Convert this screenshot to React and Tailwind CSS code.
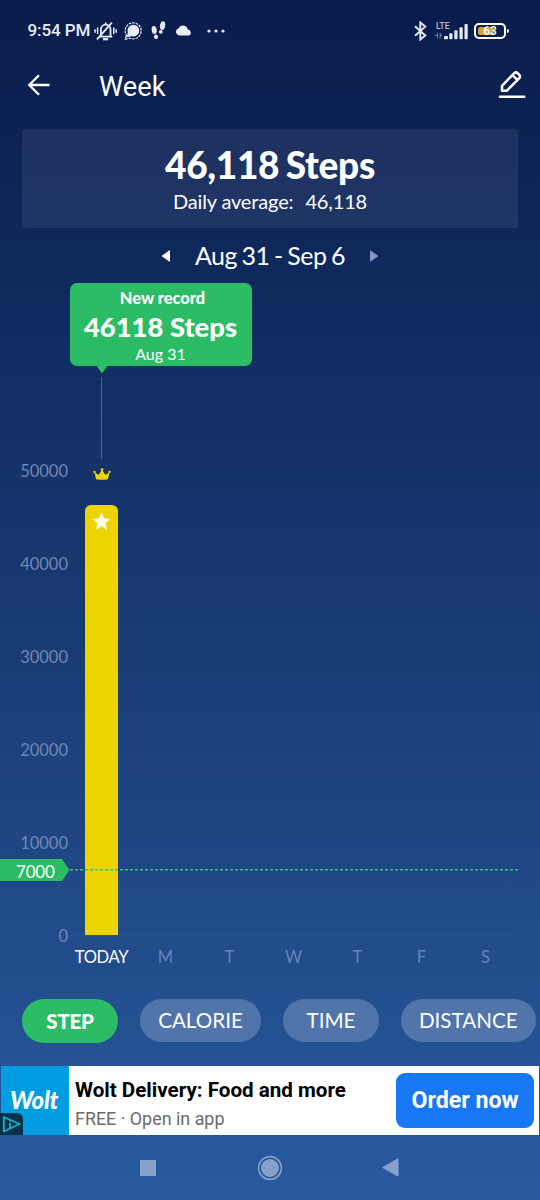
const ticks = [50000, 40000, 30000, 20000, 10000, 0]
const MAX = 50000
const PLOT_HEIGHT = 466

const days = [
  { label: "TODAY", steps: 46118, record: true },
  { label: "M", steps: 0 },
  { label: "T", steps: 0 },
  { label: "W", steps: 0 },
  { label: "T", steps: 0 },
  { label: "F", steps: 0 },
  { label: "S", steps: 0 },
]

function StatusBar() {
  return (
    <div className="h-[60px] shrink-0 flex items-center pt-[1px] pl-[27.5px] pr-[31px] font-['Roboto',sans-serif] text-[#e8ecf8]">
      <span className="w-[66px] pt-px text-[17px] font-medium tracking-[-0.1px] whitespace-nowrap">9:54 PM</span>
      {/* muted / vibrating bell */}
      <svg className="w-[23px] h-[20px]" viewBox="0 0 23 20" fill="none" stroke="currentColor" strokeWidth="1.8">
        <path d="M5.6 15.6h12.6M6.9 15V8.5a4.8 4.8 0 0 1 9.6 0V15M11.7 3.8V1.4" />
        <path d="M3 18.3 17.9 1.6" />
        <path d="M9 18.2h5.2" strokeWidth="2.2" />
        <path d="M3.6 6.5v6.5M1 8.3v3.4M19.8 6.5v6.5M22.2 8.3v3.4" strokeWidth="1.5" />
      </svg>
      <svg className="w-[18px] h-[18px] ml-[7px]" viewBox="0 0 18 18">
        <circle cx="9.4" cy="8.6" r="5.9" fill="currentColor" />
        <path d="m3.8 10.6-.9 4.6 5-1z" fill="currentColor" />
        <path
          d="M3.4 14.4A8 8 0 1 1 6 16.2L1.4 17.2 2.3 13"
          fill="none"
          stroke="currentColor"
          strokeWidth="1.2"
          strokeDasharray="2.6 0.9"
        />
      </svg>
      <svg className="w-[15px] h-[19px] ml-[9px]" viewBox="0 0 15 19" fill="currentColor">
        <ellipse cx="3.2" cy="9" rx="2.5" ry="4" transform="rotate(-9 3.2 9)" />
        <ellipse cx="5" cy="15.8" rx="2" ry="2.3" transform="rotate(-12 5 15.8)" />
        <ellipse cx="11.6" cy="4.7" rx="2.6" ry="4.4" transform="rotate(9 11.6 4.7)" />
        <ellipse cx="9.8" cy="10.9" rx="1.9" ry="1.8" />
      </svg>
      <svg className="w-[17px] h-[11px] ml-[9px] mt-[-1px]" viewBox="0 0 17 11" fill="currentColor">
        <path d="M4 10.5A3.7 3.7 0 0 1 3.4 3.4a5 5 0 0 1 9.4 1.2A3 3 0 0 1 13.6 10.5z" />
      </svg>
      <svg className="w-[18px] h-1 ml-[15px]" viewBox="0 0 18 4" fill="currentColor">
        <circle cx="2" cy="2" r="1.6" />
        <circle cx="9" cy="2" r="1.6" />
        <circle cx="16" cy="2" r="1.6" />
      </svg>
      <div className="ml-auto flex items-center">
        <svg className="w-[13px] h-[20px]" viewBox="0 0 13 20" fill="none" stroke="currentColor" strokeWidth="1.9">
          <path d="m1 5.2 10.3 9.3L6.3 18.5v-17L11.3 5.6 1 14.8" />
        </svg>
        <div className="w-[33px] h-[18px] ml-2 flex flex-col justify-between relative">
          <span className="text-[8.5px] leading-[9px] pl-px text-[#b4bfdc] font-medium">LTE</span>
          <svg className="absolute left-0 bottom-0 w-[33px] h-[17px]" viewBox="0 0 33 17" fill="currentColor">
            <path d="M0 12h2V9.8h1v5.6H2V13H0zM4.6 9.8h1v1.4l2 1.6-2 .4v2.2h-1z" opacity=".5" />
            <rect x="9" y="13" width="4" height="3.3" rx="1" />
            <rect x="14.3" y="10.3" width="3.2" height="6" rx="1" />
            <rect x="19.3" y="7.2" width="3.2" height="9.1" rx="1" />
            <rect x="24.5" y="4.2" width="3.2" height="12.1" rx="1" />
            <rect x="29.5" y="1" width="3.2" height="15.3" rx="1" />
          </svg>
        </div>
        <div className="relative w-[32px] h-[16px] ml-[6px] border-2 border-white rounded-[5px] p-[2px]">
          <div className="w-[16px] h-full rounded-[2px] bg-[#e0a030]" />
          <span className="absolute inset-0 text-center text-[12px] leading-[12px] font-medium text-white">63</span>
        </div>
        <div className="w-[2px] h-1 ml-px rounded-r bg-white" />
      </div>
    </div>
  )
}

function AppBar() {
  return (
    <header className="h-[69px] shrink-0 flex items-start pl-[27px] pr-[14px] text-white">
      <svg className="w-[24px] h-[22px] mt-[14px]" viewBox="0 0 24 22" fill="none" stroke="currentColor" strokeWidth="2.3">
        <path d="M22.5 11H2.5M12 1.2 2.2 11l9.8 9.8" />
      </svg>
      <h1 className="ml-12 mt-[9px] text-[27.3px] leading-[36px] font-['Roboto',sans-serif]">Week</h1>
      <svg
        className="w-[28px] h-[28px] ml-auto mt-[11px]"
        viewBox="0 0 28 28"
        fill="none"
        stroke="currentColor"
        strokeWidth="2.5"
        strokeLinecap="round"
        strokeLinejoin="round"
      >
        <path d="M4 19.8v-5L16 2.3a2.7 2.7 0 0 1 3.8 0l1.3 1.3a2.7 2.7 0 0 1 0 3.8L8.9 19.7zM14.6 4.2l4.4 4.4" />
        <path d="M2 25.7h24.2" strokeWidth="2.6" />
      </svg>
    </header>
  )
}

function RecordTooltip() {
  return (
    <div className="absolute left-[69.5px] top-0 w-[182px] h-[82.5px] rounded-[7px] bg-[#2dbc66] text-white text-center">
      <p className="pt-1 pl-[4px] text-[16.4px] leading-[21px] font-black">New record</p>
      <p className="text-[27.4px] leading-[37px] font-black whitespace-nowrap">46118 Steps</p>
      <p className="text-[16px] leading-[18px]">Aug 31</p>
      <svg className="absolute left-[26px] top-[82px] w-[12px] h-[9px]" viewBox="0 0 12 9" fill="#2dbc66">
        <path d="M0 0h12L6 8.5z" />
      </svg>
    </div>
  )
}

function DayBar({ day }) {
  return (
    <div className="flex flex-col items-center justify-end">
      {day.record && (
        <>
          <div className="w-px h-[82px] bg-[#25806b]" />
          <svg className="w-[18px] h-[12px] mt-[9px] mb-[25px]" viewBox="0 0 18 12" fill="#ecd400">
            <path d="M3 11.2 1.5 4.5 5.8 6.8 9 1.8l3.2 5 4.3-2.3L15 11.2q-6 1.2-12 0z" />
            <circle cx="1.5" cy="3.9" r="1.2" />
            <circle cx="9" cy="1.6" r="1.4" />
            <circle cx="16.5" cy="3.9" r="1.2" />
          </svg>
        </>
      )}
      {day.steps > 0 && (
        <div
          className="w-[32.5px] shrink-0 rounded-t-[6px] bg-[#ecd400] flex justify-center pt-[7px]"
          style={{ height: (day.steps / MAX) * PLOT_HEIGHT }}
        >
          <svg className="w-[19px] h-[18px]" viewBox="0 0 19 18" fill="#fffce4">
            <path d="m9.5.3 2.6 6 6.5.6-4.9 4.4 1.4 6.4-5.6-3.3-5.6 3.3 1.4-6.4L.4 6.9l6.5-.6z" />
          </svg>
        </div>
      )}
    </div>
  )
}

function StepsChart() {
  return (
    <section className="relative h-[685px] shrink-0">
      <div className="flex h-[665px]">
        <div className="w-[68px] pt-[176px] flex flex-col justify-between text-right text-[16.5px] leading-6 text-[#7186b5]">
          {ticks.map((t) => (
            <span key={t}>{t}</span>
          ))}
        </div>
        <div className="ml-[1.5px] w-[448px] h-[653px] grid grid-cols-7 border-b border-white/3">
          {days.map((day, i) => (
            <DayBar key={i} day={day} />
          ))}
        </div>
      </div>
      <div className="ml-[69.5px] w-[448px] grid grid-cols-7 justify-items-center text-[16.6px] leading-[18px]">
        {days.map((day, i) => (
          <span key={i} className={day.record ? "text-white tracking-[-0.4px]" : "text-[#6683b8]"}>
            {day.label}
          </span>
        ))}
      </div>

      {/* daily goal marker */}
      <div className="absolute left-0 top-[575px] w-[518px] h-[23px] flex items-center">
        <div className="relative w-[70px] h-[22px] text-white text-[17px] leading-[25px]">
          <svg className="absolute inset-0 w-[70px] h-[22px]" viewBox="0 0 70 22" fill="#2dbc66">
            <path d="M0 0h62l7.5 11L62 22H0z" />
          </svg>
          <span className="relative pl-4 tracking-[-0.2px]">7000</span>
        </div>
        <svg className="flex-1 h-[2px]" viewBox="0 0 448 2" preserveAspectRatio="none">
          <path d="M0 .8h448" stroke="#36c27a" strokeWidth="1.6" strokeDasharray="3 2" />
        </svg>
      </div>
      <RecordTooltip />
    </section>
  )
}

function MetricTabs() {
  return (
    <div className="mt-[31px] h-[67px] shrink-0 flex items-start gap-[22px] pl-[22px] text-[20.6px] text-white">
      <button className="w-24 h-[44px] shrink-0 rounded-full bg-[#2dbc66] font-black tracking-[-0.3px]">STEP</button>
      <button className="w-[121px] h-[43px] shrink-0 rounded-full bg-[#5174ab]">CALORIE</button>
      <button className="w-24 h-[43px] shrink-0 rounded-full bg-[#5174ab]">TIME</button>
      <button className="w-[134.5px] h-[43px] shrink-0 rounded-full bg-[#5174ab]">DISTANCE</button>
    </div>
  )
}

function AdBanner() {
  return (
    <div className="h-[69px] shrink-0 flex bg-white font-['Roboto',sans-serif] mx-px">
      <div className="relative w-[68px] h-full bg-[#009de0] text-white">
        <span className="block pt-[19px] pr-[2px] text-center text-[24px] leading-[30px] font-['Lato',sans-serif] font-black italic tracking-[-0.3px]">
          Wolt
        </span>
        <svg className="absolute left-[-1px] bottom-0 w-[23px] h-[22px]" viewBox="0 0 23 22" fill="none">
          <path d="M0 0h17a6 6 0 0 1 6 6v16H0z" fill="#07304a" />
          <path d="M3.8 4v14.5L19.5 11z" stroke="#14b3c9" strokeWidth="1.8" strokeLinejoin="round" />
          <path d="M10 10v5M10 7v1.6" stroke="#14b3c9" strokeWidth="1.9" />
        </svg>
      </div>
      <div className="pl-[6px] pt-[11px]">
        <p className="text-[20.6px] leading-[27px] font-bold text-black whitespace-nowrap">Wolt Delivery: Food and more</p>
        <p className="text-[17.9px] leading-[30px] text-[#6b6b6b]">FREE · Open in app</p>
      </div>
      <button className="ml-auto mr-[5px] mt-[7px] w-[138px] h-[55px] rounded-[9px] bg-[#1877f2] text-white text-[23.2px] font-bold whitespace-nowrap">
        Order now
      </button>
    </div>
  )
}

function NavBar() {
  return (
    <nav className="h-[65px] shrink-0 flex items-center pl-[140px] text-[#87a0cb]">
      <div className="w-[16px] h-[16px] bg-current" />
      <svg className="w-[26px] h-[26px] ml-[101px]" viewBox="0 0 26 26">
        <circle cx="13" cy="13" r="11.4" fill="none" stroke="currentColor" strokeWidth="1.6" />
        <circle cx="13" cy="13" r="9" fill="currentColor" />
      </svg>
      <svg className="w-[17px] h-[19px] ml-[98.5px]" viewBox="0 0 17 19" fill="currentColor">
        <path d="M16 .8v17.4L.6 9.5z" stroke="currentColor" strokeLinejoin="round" />
      </svg>
    </nav>
  )
}

export default function App() {
  return (
    <div className="w-[540px] h-[1200px] overflow-hidden flex flex-col bg-linear-to-b from-[#091c4c] via-[#183971] to-[#295a9f] font-['Lato',sans-serif]">
      <StatusBar />
      <AppBar />
      <div className="mx-[22px] h-[99px] shrink-0 rounded-[4px] bg-white/7 text-white text-center">
        <p className="pt-[13px] text-[37px] leading-[46px] font-black tracking-[-0.3px] [word-spacing:-2px]">46,118 Steps</p>
        <p className="text-[20px] leading-[26px] tracking-[-0.15px]">
          Daily average:<span className="ml-3">46,118</span>
        </p>
      </div>
      <div className="h-[55px] shrink-0 flex items-center justify-center text-white">
        <svg className="w-[9px] h-[12px]" viewBox="0 0 9 12" fill="currentColor">
          <path d="M9 0v12L.5 6z" />
        </svg>
        <span className="w-[200px] pb-[2px] text-center text-[25px] leading-[30px] tracking-[-0.5px] [word-spacing:-1.4px]">
          Aug 31 - Sep 6
        </span>
        <svg className="w-[9px] h-[12px] text-[#8495bd]" viewBox="0 0 9 12" fill="currentColor">
          <path d="M0 0v12l8.5-6z" />
        </svg>
      </div>
      <StepsChart />
      <MetricTabs />
      <AdBanner />
      <NavBar />
    </div>
  )
}
